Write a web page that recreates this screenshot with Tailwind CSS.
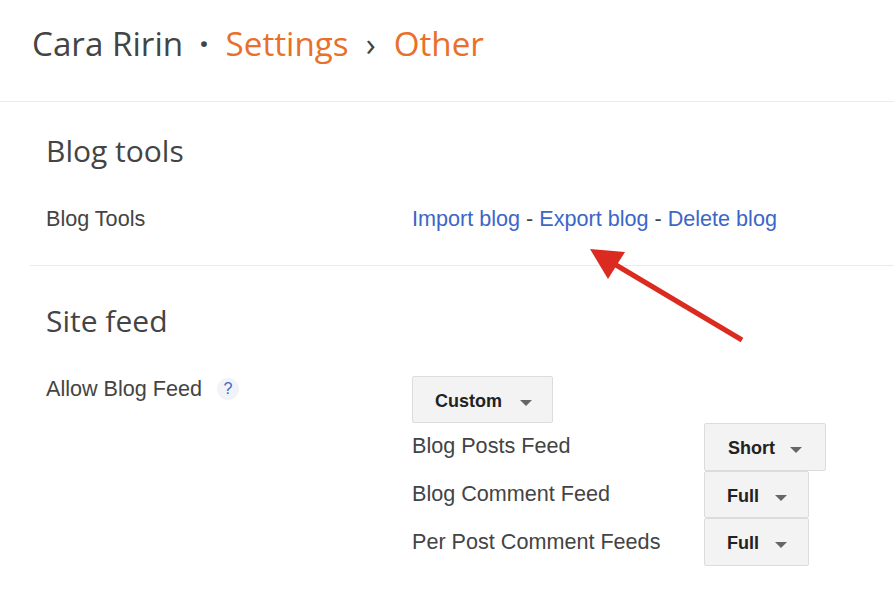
<!DOCTYPE html>
<html>
<head>
    <title>Settings - Other</title>
    <script src="https://cdn.jsdelivr.net/npm/@tailwindcss/browser@4"></script>
</head>
<body class="bg-white font-['Liberation_Sans',Arial,sans-serif] text-[21.6px] text-[#444]">
    <div class="relative h-[593px] w-[894px] overflow-hidden">
        <!-- Header -->
        <div class="flex h-[102px] items-start border-b border-[#ebebeb] pl-[32px] pt-[22px] font-['Open_Sans',sans-serif] text-[33.2px] leading-[44px] text-[#444]">
            <span>Cara Ririn</span>
            <span class="ml-[16px] font-bold text-[#444]">·</span>
            <a class="ml-[17px] text-[#e8702a]">Settings</a>
            <span class="ml-[17px] text-[#444]">›</span>
            <a class="ml-[18px] text-[#e8702a]">Other</a>
        </div>

        <!-- Blog tools -->
        <div class="ml-[30px] h-[164px] border-b border-[#ebebeb] pl-[16px] pt-[27px]">
            <h2 class="font-['Open_Sans',sans-serif] text-[30px] leading-[44px] text-[#444]">Blog tools</h2>
            <div class="mt-[33px] flex leading-[26px]">
                <div class="w-[366px]">Blog Tools</div>
                <div class="text-[#3c66c8]">
                    <a>Import blog</a> <span class="text-[#444]">-</span>
                    <a>Export blog</a> <span class="text-[#444]">-</span>
                    <a>Delete blog</a>
                </div>
            </div>
        </div>

        <!-- Site feed -->
        <div class="pl-[46px] pt-[33px]">
            <h2 class="font-['Open_Sans',sans-serif] text-[30px] leading-[44px] text-[#444]">Site feed</h2>
            <div class="mt-[33px] flex">
                <div class="flex h-[26px] w-[366px] items-center">
                    <span>Allow Blog Feed</span>
                    <span class="ml-[15px] flex h-[22px] w-[22px] items-center justify-center rounded-full bg-[#f1f3f8] text-[16px] text-[#3c66c8]">?</span>
                </div>
                <div>
                    <button class="flex h-[47px] w-[141px] items-center rounded-[2px] border border-[#dcdcdc] bg-[#f3f3f3] pl-[22px] pt-[3px] text-[18px] font-bold text-[#222]">
                        Custom<span class="ml-[18px] mt-[3px] h-0 w-0 border-x-[6px] border-t-[6px] border-x-transparent border-t-[#666]"></span>
                    </button>
                    <div class="flex h-[48px] items-center">
                        <span class="w-[292px] -translate-y-px">Blog Posts Feed</span>
                        <button class="flex h-[48px] w-[122px] items-center rounded-[2px] border border-[#dcdcdc] bg-[#f3f3f3] pl-[23px] pt-[3px] text-[18px] font-bold text-[#222]">
                            Short<span class="ml-[15px] mt-[3px] h-0 w-0 border-x-[6px] border-t-[6px] border-x-transparent border-t-[#666]"></span>
                        </button>
                    </div>
                    <div class="flex h-[47px] items-center">
                        <span class="w-[292px]">Blog Comment Feed</span>
                        <button class="flex h-[47px] w-[105px] items-center rounded-[2px] border border-[#dcdcdc] bg-[#f3f3f3] pl-[22px] pt-[3px] text-[18px] font-bold text-[#222]">
                            Full<span class="ml-[16px] mt-[3px] h-0 w-0 border-x-[6px] border-t-[6px] border-x-transparent border-t-[#666]"></span>
                        </button>
                    </div>
                    <div class="flex h-[48px] items-center">
                        <span class="w-[292px]">Per Post Comment Feeds</span>
                        <button class="flex h-[48px] w-[105px] items-center rounded-[2px] border border-[#dcdcdc] bg-[#f3f3f3] pl-[22px] pt-[3px] text-[18px] font-bold text-[#222]">
                            Full<span class="ml-[16px] mt-[3px] h-0 w-0 border-x-[6px] border-t-[6px] border-x-transparent border-t-[#666]"></span>
                        </button>
                    </div>
                </div>
            </div>
        </div>

        <!-- Annotation arrow -->
        <svg class="absolute left-0 top-0" width="894" height="593" viewBox="0 0 894 593" fill="none">
            <line x1="742" y1="340" x2="616" y2="265" stroke="#db2a20" stroke-width="5"/>
            <polygon points="590,249 625,252 608,279" fill="#db2a20"/>
        </svg>
    </div>
</body>
</html>
